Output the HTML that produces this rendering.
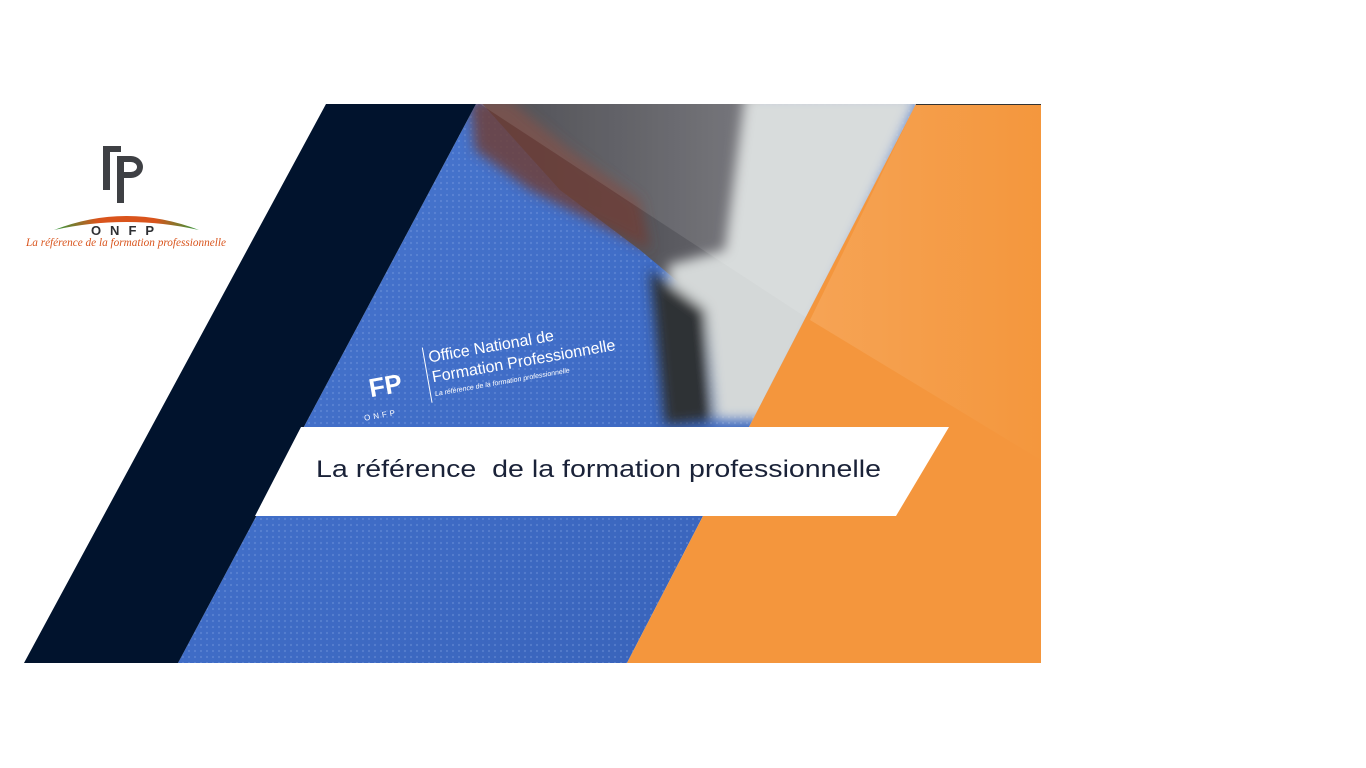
<!DOCTYPE html>
<html><head><meta charset="utf-8"><style>
html,body{margin:0;padding:0;background:#fff;width:1366px;height:768px;overflow:hidden}
svg{display:block}
</style></head><body>
<svg width="1366" height="768" viewBox="0 0 1366 768" xmlns="http://www.w3.org/2000/svg">
<defs>
<linearGradient id="top" x1="0" y1="0" x2="1" y2="0">
<stop offset="0" stop-color="#3a3a40"/><stop offset="0.6" stop-color="#55555b"/><stop offset="1" stop-color="#6a6a70"/>
</linearGradient>
<linearGradient id="jk" x1="0" y1="0" x2="1" y2="1">
<stop offset="0" stop-color="#4a78d0"/><stop offset="0.5" stop-color="#3f6cc6"/><stop offset="1" stop-color="#365fb4"/>
</linearGradient>
<linearGradient id="or" x1="0" y1="0" x2="1" y2="0">
<stop offset="0" stop-color="#f6a659"/><stop offset="1" stop-color="#f4973d"/>
</linearGradient>
<linearGradient id="arc" x1="0" y1="0" x2="1" y2="0">
<stop offset="0" stop-color="#2f9a3d"/><stop offset="0.3" stop-color="#d9541c"/><stop offset="0.7" stop-color="#d9541c"/><stop offset="1" stop-color="#2f9a3d"/>
</linearGradient>
<pattern id="dots" width="6" height="6" patternUnits="userSpaceOnUse"><circle cx="3" cy="3" r="1.1" fill="#8fb0ea" opacity="0.5"/></pattern>
<filter id="bl"><feGaussianBlur stdDeviation="6"/></filter>
<clipPath id="ph"><polygon points="476,104 916,104 627,663 178,663"/></clipPath>
</defs>

<!-- photo region -->
<g clip-path="url(#ph)">
<rect x="170" y="100" width="760" height="570" fill="url(#jk)"/>
<rect x="170" y="100" width="760" height="570" fill="url(#dots)" opacity="0.6"/>
<path d="M470,90 L760,90 L760,270 L700,300 L640,250 L560,190 Z" fill="url(#top)"/>
<g filter="url(#bl)">
<path d="M470,100 L510,100 L570,150 L640,200 L650,250 L600,225 L530,190 L475,150 Z" fill="#6e3f38" opacity="0.85"/>
<path d="M745,95 L920,95 L770,420 L715,420 L705,310 L672,300 L668,265 L725,250 Z" fill="#d4d8d8"/>
<path d="M650,270 L705,310 L712,420 L665,425 L655,320 Z" fill="#2d3036"/>
</g>
<polygon points="480,104 916,104 810,320" fill="#ffffff" opacity="0.1"/>
</g>
<!-- jacket label -->
<g transform="rotate(-10 490 360)" fill="#fff" font-family="Liberation Sans, sans-serif">
<text x="430" y="352" font-size="16">Office National de</text>
<text x="430" y="372" font-size="16">Formation Professionnelle</text>
<text x="430" y="386" font-size="7" font-style="italic">La référence de la formation professionnelle</text>
<rect x="425" y="336" width="1" height="56"/>
<text x="366" y="376" font-size="26" font-weight="bold">FP</text>
<text x="356" y="398" font-size="8" letter-spacing="3">ONFP</text>
</g>

<!-- orange -->
<polygon points="916,104 1041,104 1041,663 627,663" fill="#f4963d"/>
<polygon points="916,104 1041,104 1041,460 810,320" fill="url(#or)" opacity="0.85"/>
<rect x="916" y="104" width="125" height="1" fill="#333"/>

<!-- navy -->
<polygon points="326,104 476,104 178,663 24,663" fill="#01132d"/>

<!-- white banner -->
<polygon points="301,427 949,427 896,516 255,516" fill="#fff"/>
<text x="316" y="477" font-family="Liberation Sans, sans-serif" font-size="24" fill="#1a2238" textLength="565" lengthAdjust="spacingAndGlyphs" xml:space="preserve">La référence  de la formation professionnelle</text>

<!-- logo -->
<g fill="#3e4044">
<rect x="103" y="146" width="7" height="44"/>
<rect x="103" y="146" width="18" height="6"/>
<rect x="117" y="156" width="7" height="47"/>
<path d="M117,156 h14 a12,11 0 0 1 0,22 h-14 v-6 h14 a6,5 0 0 0 0,-10 h-14z"/>
</g>
<path d="M54,230 Q126,202 199,230 Q126,214 54,230 Z" fill="url(#arc)"/>
<text x="127" y="235" text-anchor="middle" font-family="Liberation Sans, sans-serif" font-weight="bold" font-size="13" letter-spacing="9" fill="#2d2f33">ONFP</text>
<text x="126" y="246" text-anchor="middle" font-family="Liberation Serif, serif" font-style="italic" font-size="11.5" fill="#d9541c" textLength="200" lengthAdjust="spacingAndGlyphs">La référence de la formation professionnelle</text>
</svg>
</body></html>
